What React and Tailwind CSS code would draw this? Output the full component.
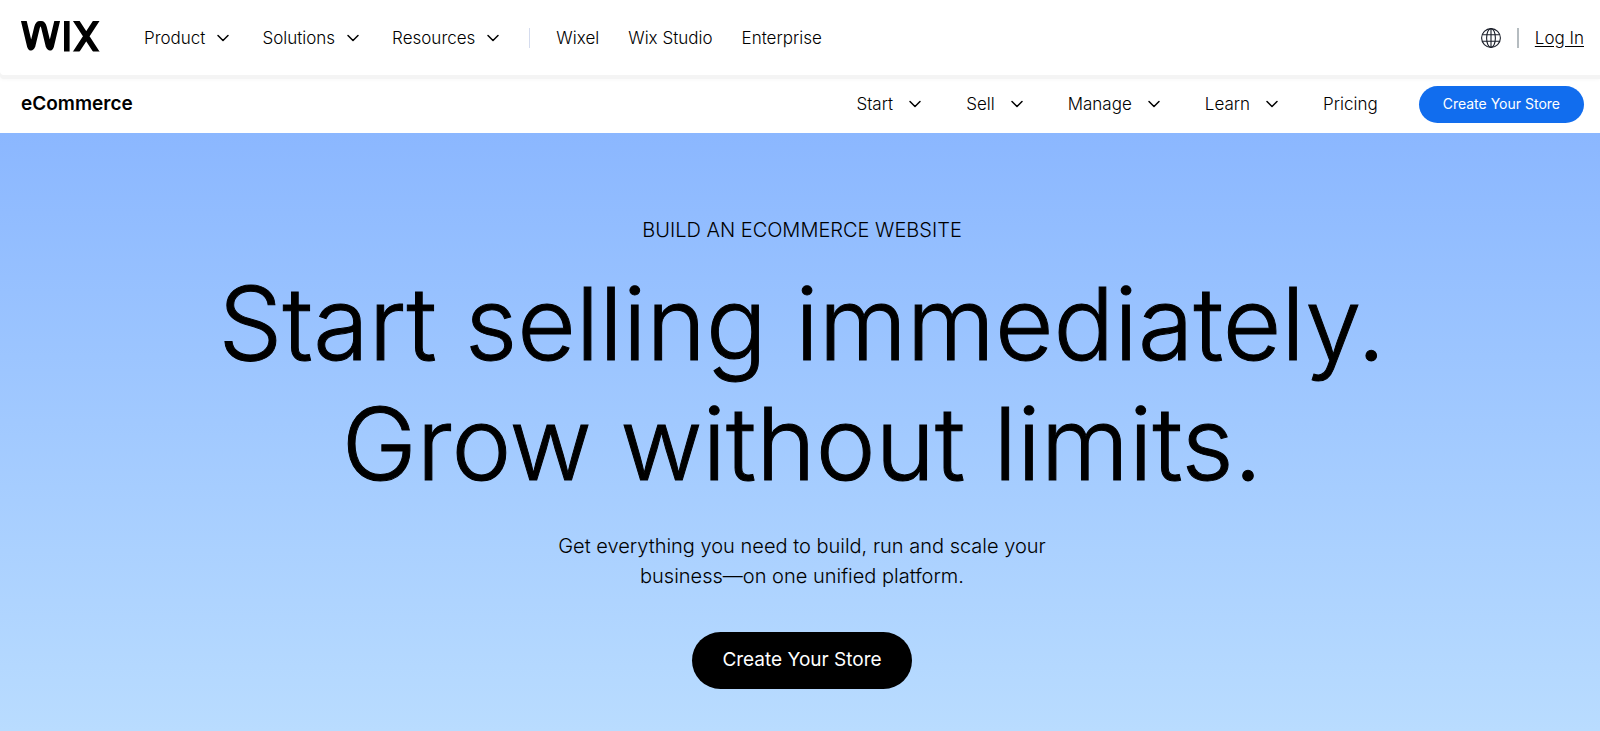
import { ChevronDown } from 'lucide-react';

const MAIN_MENUS = ['Product', 'Solutions', 'Resources'];
const MAIN_LINKS = ['Wixel', 'Wix Studio', 'Enterprise'];
const STORE_MENUS = ['Start', 'Sell', 'Manage', 'Learn'];

function WixLogo() {
  return (
    <svg viewBox="0 0 79 33" className="h-[33px] w-[79px]" role="img" aria-label="Wix">
      <clipPath id="logo-edge">
        <rect width="79" height="30.5" />
      </clipPath>
      <g fill="none" stroke="#000" strokeWidth="5.6" clipPath="url(#logo-edge)">
        <path d="M2.6 -1 L8.8 25 Q10 28.5 11.5 25 L16 6.5 Q16.9 2.8 18.8 2.8 H20.2 Q22.1 2.8 23 6.5 L27.5 25 Q29 28.5 30.2 25 L36.4 -1" />
        <path d="M45.8 0 V31" />
        <path d="M54 -2 L76.5 32.5 M76.5 -2 L54 32.5" />
      </g>
    </svg>
  );
}

function GlobeIcon() {
  return (
    <svg viewBox="0 0 20 20" className="size-5" fill="none" stroke="#1b1f2a" strokeWidth="1.1">
      <circle cx="10" cy="10" r="9.4" />
      <ellipse cx="10" cy="10" rx="4.4" ry="9.4" />
      <path d="M10 0.6V19.4M1.2 6.8H18.8M1.2 13.2H18.8" />
    </svg>
  );
}

function MenuButton({ label, gap }) {
  return (
    <button type="button" className={`flex items-center ${gap}`}>
      {label}
      <ChevronDown size={20} strokeWidth={1.8} />
    </button>
  );
}

export default function App() {
  return (
    <div className="flex min-h-screen flex-col bg-white font-['Inter',sans-serif] text-black">
      <header className="z-10 flex h-[75px] items-center rounded-bl-sm bg-white pl-[21px] pr-4 text-[17px] leading-7 font-light shadow-[0_4px_0_#f4f4f4,0_4px_4px_#f4f4f4]">
        <a href="#home"><WixLogo /></a>
        <nav className="ml-11 flex items-center">
          <div className="flex gap-[29px]">
            {MAIN_MENUS.map((label) => (
              <MenuButton key={label} label={label} gap="gap-2" />
            ))}
          </div>
          <span className="mx-[26px] h-5 w-px bg-[#d5dcee]" />
          <div className="flex gap-[29px]">
            {MAIN_LINKS.map((label) => (
              <a key={label} href="#link">{label}</a>
            ))}
          </div>
        </nav>
        <div className="ml-auto flex items-center">
          <button type="button" aria-label="Language"><GlobeIcon /></button>
          <span className="mx-4 h-5 w-0.5 bg-[#b5bcc0]" />
          <a href="#login" className="underline underline-offset-2">Log In</a>
        </div>
      </header>

      <div className="flex h-[58px] items-center justify-between pl-[21px] pr-4 leading-7">
        <a href="#ecommerce" className="text-[19px] font-semibold">eCommerce</a>
        <nav className="flex items-center gap-[41px] text-[17px] font-light">
          {STORE_MENUS.map((label) => (
            <MenuButton key={label} label={label} gap="gap-3" />
          ))}
          <a href="#pricing">Pricing</a>
          <button type="button" className="h-[37px] rounded-full bg-[#116dee] px-6 text-sm font-normal text-white">
            Create Your Store
          </button>
        </nav>
      </div>

      <main className="flex grow flex-col items-center bg-linear-to-b from-[#8bb7ff] to-[#b9dcff] pt-[83px] pr-4 pb-10 pl-5 text-center">
        <p className="text-xl font-light">BUILD AN ECOMMERCE WEBSITE</p>
        <h1 className="mt-[19px] text-[101px] leading-[120px] font-light [-webkit-text-stroke:1px_#000]">
          Start selling immediately.
          <br />
          Grow without limits.
        </h1>
        <p className="mt-7 max-w-[500px] text-xl leading-[30px] font-light">
          Get everything you need to build, run and scale your business—on one unified platform.
        </p>
        <button type="button" className="mt-[41px] h-[57px] rounded-full bg-black px-[30px] text-[19px] text-white">
          Create Your Store
        </button>
      </main>
    </div>
  );
}
